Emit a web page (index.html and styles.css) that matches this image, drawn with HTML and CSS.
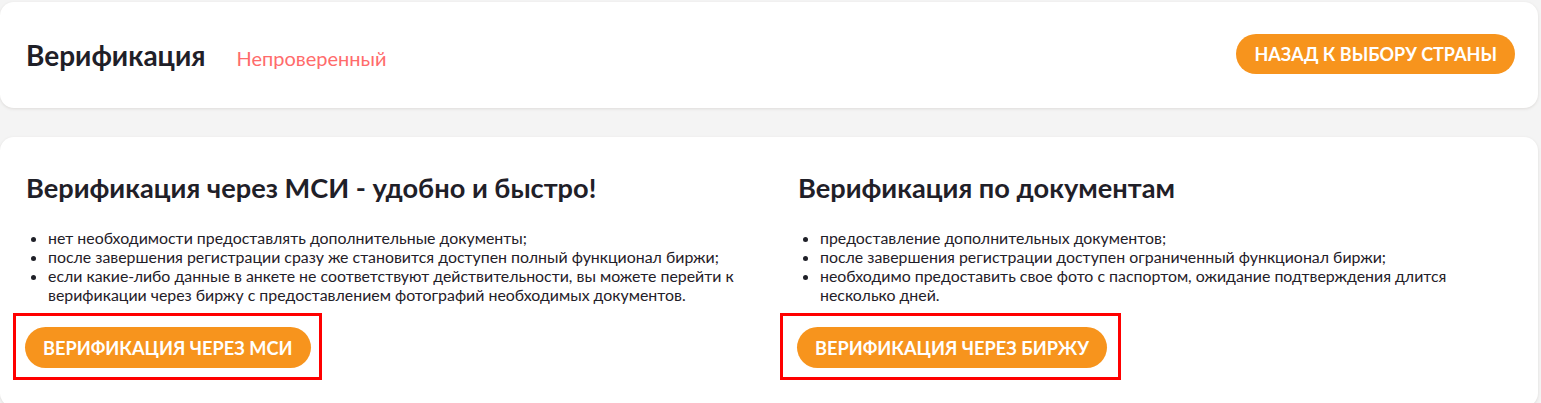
FILE: index.html
```html
<!DOCTYPE html>
<html lang="ru">
<head>
<meta charset="utf-8">
<title>Верификация</title>
<link rel="stylesheet" href="styles.css">
</head>
<body>
<div class="page">
  <header class="card header">
    <div class="header-left">
      <h1 class="title">Верификация</h1>
      <span class="status">Непроверенный</span>
    </div>
    <button class="btn btn-back">НАЗАД К ВЫБОРУ СТРАНЫ</button>
  </header>
  <section class="card options">
    <div class="option">
      <h2 class="option-title">Верификация через МСИ - удобно и быстро!</h2>
      <ul class="option-list">
        <li>нет необходимости предоставлять дополнительные документы;</li>
        <li>после завершения регистрации сразу же становится доступен полный функционал биржи;</li>
        <li>если какие-либо данные в анкете не соответствуют действительности, вы можете перейти к верификации через биржу с предоставлением фотографий необходимых документов.</li>
      </ul>
      <div class="highlight">
        <button class="btn">ВЕРИФИКАЦИЯ ЧЕРЕЗ МСИ</button>
      </div>
    </div>
    <div class="option option-docs">
      <h2 class="option-title">Верификация по документам</h2>
      <ul class="option-list">
        <li>предоставление дополнительных документов;</li>
        <li>после завершения регистрации доступен ограниченный функционал биржи;</li>
        <li>необходимо предоставить свое фото с паспортом, ожидание подтверждения длится несколько дней.</li>
      </ul>
      <div class="highlight">
        <button class="btn">ВЕРИФИКАЦИЯ ЧЕРЕЗ БИРЖУ</button>
      </div>
    </div>
  </section>
</div>
</body>
</html>
```

FILE: styles.css
```css
* { box-sizing: border-box; }
html, body { margin: 0; padding: 0; }
body {
  background: #f4f4f4;
  font-family: Lato, "Noto Sans", sans-serif;
  color: #1f2028;
  width: 1541px;
  height: 403px;
  overflow: hidden;
}
.page {
  display: flex;
  flex-direction: column;
  gap: 29px;
  padding: 2px 3px 0 0;
}
.card {
  background: #fff;
  border-radius: 14px;
  box-shadow: 0 1px 3px rgba(120, 110, 100, 0.18);
}
.header {
  height: 106px;
  display: flex;
  align-items: center;
  justify-content: space-between;
  padding: 0 23px 0 26px;
}
.header-left {
  display: flex;
  align-items: baseline;
  gap: 31px;
}
.title {
  margin: 0;
  font-size: 28px;
  font-weight: 700;
  color: #1f2028;
}
.status {
  font-size: 20px;
  color: #ff6b6b;
}
.btn {
  border: none;
  background: #f7941d;
  color: #fff;
  font-family: Lato, "Noto Sans", sans-serif;
  font-weight: 700;
  font-size: 18.2px;
  height: 41px;
  border-radius: 21px;
  padding: 0 18px;
  cursor: pointer;
}
.btn-back {
  font-size: 18px;
  height: 40px;
  margin-top: -2px;
}
.options {
  display: grid;
  grid-template-columns: 772px 1fr;
  padding: 34px 26px 0 26px;
  height: 270px;
}
.option-title {
  margin: 0 0 24px 0;
  font-size: 27.2px;
  font-weight: 700;
  color: #1f2028;
}
.option-list {
  margin: 0;
  padding-left: 22px;
  width: 717px;
  font-size: 15.9px;
  line-height: 19px;
  color: #1f2028;
}
.highlight {
  display: inline-block;
  margin: 9px 0 0 -13px;
  padding: 11px 8px 9px 9px;
  border: 3px solid #ff0000;
}
.highlight .btn {
  display: block;
}
.option-docs .highlight {
  margin-left: -18px;
  padding-left: 14px;
  padding-right: 11px;
}
```
